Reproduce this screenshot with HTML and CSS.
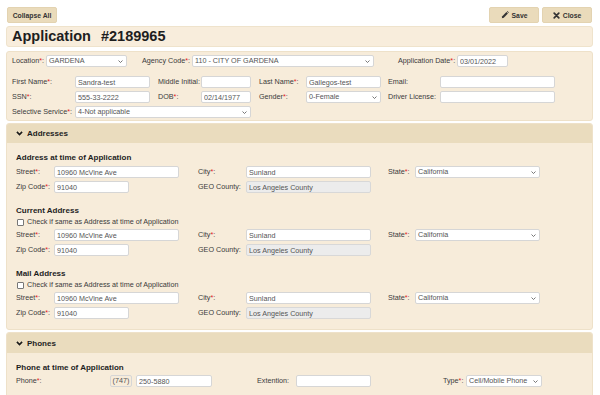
FILE: index.html
```html
<!DOCTYPE html>
<html lang="en">
<head>
<meta charset="utf-8">
<title>Application #2189965</title>
<link rel="stylesheet" href="styles.css">
</head>
<body>
<div class="page">
  <div class="toolbar">
    <button class="btn">Collapse All</button>
    <div class="toolbar-right">
      <button class="btn btn-icon"><svg class="ico" width="8" height="8" viewBox="0 0 8 8"><path d="M0.8 7.2 L1.3 5.2 L5.4 1.1 L6.9 2.6 L2.8 6.7 Z" fill="#333"/><path d="M5.9 0.6 L6.4 0.1 L7.9 1.6 L7.4 2.1 Z" fill="#333"/></svg>Save</button>
      <button class="btn btn-icon"><svg class="ico" width="7" height="7" viewBox="0 0 7 7"><path d="M1.2 1.2 L5.8 5.8 M5.8 1.2 L1.2 5.8" stroke="#333" stroke-width="1.7" stroke-linecap="round"/></svg>Close</button>
    </div>
  </div>

  <div class="titlebar">
    <h1 class="title">Application<span class="appno">#2189965</span></h1>
  </div>

  <div class="panel main-panel">
    <div class="grid-top">
      <span class="lbl">Location<span class="req">*</span>:</span>
      <div class="sel w81"><span>GARDENA</span><svg class="caret" width="5" height="3" viewBox="0 0 5 3"><path d="M0.5 0.5 L2.5 2.5 L4.5 0.5" stroke="#555" stroke-width="0.8" fill="none"/></svg></div>
      <span class="lbl">Agency Code<span class="req">*</span>:</span>
      <div class="sel w182"><span>110 - CITY OF GARDENA</span><svg class="caret" width="5" height="3" viewBox="0 0 5 3"><path d="M0.5 0.5 L2.5 2.5 L4.5 0.5" stroke="#555" stroke-width="0.8" fill="none"/></svg></div>
      <span class="lbl">Application Date<span class="req">*</span>:</span>
      <input class="inp w51" value="03/01/2022" readonly>
    </div>

    <div class="grid-person">
      <span class="lbl">First Name<span class="req">*</span>:</span>
      <input class="inp w75" value="Sandra-test" readonly>
      <span class="lbl">Middle Initial:</span>
      <input class="inp w50" value="" readonly>
      <span class="lbl">Last Name<span class="req">*</span>:</span>
      <input class="inp w75" value="Gallegos-test" readonly>
      <span class="lbl">Email:</span>
      <input class="inp w115" value="" readonly>

      <span class="lbl">SSN<span class="req">*</span>:</span>
      <input class="inp w75" value="555-33-2222" readonly>
      <span class="lbl">DOB<span class="req">*</span>:</span>
      <input class="inp w50 dob" value="02/14/1977" readonly>
      <span class="lbl">Gender<span class="req">*</span>:</span>
      <div class="sel w75"><span>0-Female</span><svg class="caret" width="5" height="3" viewBox="0 0 5 3"><path d="M0.5 0.5 L2.5 2.5 L4.5 0.5" stroke="#555" stroke-width="0.8" fill="none"/></svg></div>
      <span class="lbl">Driver License:</span>
      <input class="inp w115" value="" readonly>

      <span class="lbl">Selective Service<span class="req">*</span>:</span>
      <div class="sel w176 span3"><span>4-Not applicable</span><svg class="caret" width="5" height="3" viewBox="0 0 5 3"><path d="M0.5 0.5 L2.5 2.5 L4.5 0.5" stroke="#555" stroke-width="0.8" fill="none"/></svg></div>
    </div>
  </div>

  <div class="panel section">
    <div class="sec-head"><svg class="chev" width="7" height="5" viewBox="0 0 7 5"><path d="M0.9 0.9 L3.5 3.6 L6.1 0.9" stroke="#1a1a1a" stroke-width="1.6" fill="none"/></svg>Addresses</div>
    <div class="sec-body">
      <div class="group">
        <div class="group-title">Address at time of Application</div>
        <div class="grid-addr">
          <span class="lbl">Street<span class="req">*</span>:</span>
          <input class="inp w125" value="10960 McVine Ave" readonly>
          <span class="lbl">City<span class="req">*</span>:</span>
          <input class="inp w125" value="Sunland" readonly>
          <span class="lbl">State<span class="req">*</span>:</span>
          <div class="sel w125"><span>California</span><svg class="caret" width="5" height="3" viewBox="0 0 5 3"><path d="M0.5 0.5 L2.5 2.5 L4.5 0.5" stroke="#555" stroke-width="0.8" fill="none"/></svg></div>
          <span class="lbl">Zip Code<span class="req">*</span>:</span>
          <input class="inp w75" value="91040" readonly>
          <span class="lbl">GEO County:</span>
          <input class="inp w125 dis" value="Los Angeles County" readonly>
        </div>
      </div>

      <div class="group">
        <div class="group-title">Current Address</div>
        <label class="check-row"><span class="cbox"></span>Check if same as Address at time of Application</label>
        <div class="grid-addr after-check">
          <span class="lbl">Street<span class="req">*</span>:</span>
          <input class="inp w125" value="10960 McVine Ave" readonly>
          <span class="lbl">City<span class="req">*</span>:</span>
          <input class="inp w125" value="Sunland" readonly>
          <span class="lbl">State<span class="req">*</span>:</span>
          <div class="sel w125"><span>California</span><svg class="caret" width="5" height="3" viewBox="0 0 5 3"><path d="M0.5 0.5 L2.5 2.5 L4.5 0.5" stroke="#555" stroke-width="0.8" fill="none"/></svg></div>
          <span class="lbl">Zip Code<span class="req">*</span>:</span>
          <input class="inp w75" value="91040" readonly>
          <span class="lbl">GEO County:</span>
          <input class="inp w125 dis" value="Los Angeles County" readonly>
        </div>
      </div>

      <div class="group">
        <div class="group-title">Mail Address</div>
        <label class="check-row"><span class="cbox"></span>Check if same as Address at time of Application</label>
        <div class="grid-addr after-check">
          <span class="lbl">Street<span class="req">*</span>:</span>
          <input class="inp w125" value="10960 McVine Ave" readonly>
          <span class="lbl">City<span class="req">*</span>:</span>
          <input class="inp w125" value="Sunland" readonly>
          <span class="lbl">State<span class="req">*</span>:</span>
          <div class="sel w125"><span>California</span><svg class="caret" width="5" height="3" viewBox="0 0 5 3"><path d="M0.5 0.5 L2.5 2.5 L4.5 0.5" stroke="#555" stroke-width="0.8" fill="none"/></svg></div>
          <span class="lbl">Zip Code<span class="req">*</span>:</span>
          <input class="inp w75" value="91040" readonly>
          <span class="lbl">GEO County:</span>
          <input class="inp w125 dis" value="Los Angeles County" readonly>
        </div>
      </div>
    </div>
  </div>

  <div class="panel section phones">
    <div class="sec-head"><svg class="chev" width="7" height="5" viewBox="0 0 7 5"><path d="M0.9 0.9 L3.5 3.6 L6.1 0.9" stroke="#1a1a1a" stroke-width="1.6" fill="none"/></svg>Phones</div>
    <div class="sec-body">
      <div class="group">
        <div class="group-title">Phone at time of Application</div>
        <div class="grid-phone">
          <span class="lbl">Phone<span class="req">*</span>:</span>
          <span class="area">(747)</span>
          <input class="inp w76" value="250-5880" readonly>
          <span class="lbl">Extention:</span>
          <input class="inp w75" value="" readonly>
          <span class="lbl">Type<span class="req">*</span>:</span>
          <div class="sel w76"><span>Cell/Mobile Phone</span><svg class="caret" width="5" height="3" viewBox="0 0 5 3"><path d="M0.5 0.5 L2.5 2.5 L4.5 0.5" stroke="#555" stroke-width="0.8" fill="none"/></svg></div>
        </div>
      </div>
    </div>
  </div>
</div>
</body>
</html>
```

FILE: styles.css
```css
* { box-sizing: border-box; }

html, body {
  margin: 0;
  padding: 0;
  background: #ffffff;
}

body {
  font-family: "Liberation Sans", Arial, sans-serif;
  font-size: 7.2px;
  color: #333333;
  overflow: hidden;
}

.page {
  width: 600px;
  padding: 7px 7px 0 6px;
}

/* toolbar */
.toolbar {
  display: flex;
  justify-content: space-between;
  align-items: center;
  height: 16px;
  padding: 0 1px;
}

.toolbar-right {
  display: flex;
  gap: 3px;
}

.btn {
  height: 16px;
  width: 50px;
  margin: 0;
  padding: 0;
  border: 1px solid #e3d3b1;
  border-radius: 2px;
  background: #eadbbb;
  color: #333333;
  font-family: "Liberation Sans", Arial, sans-serif;
  font-size: 6.8px;
  font-weight: bold;
  display: flex;
  align-items: center;
  justify-content: center;
}

.btn-icon .ico {
  margin-right: 3px;
}

/* title */
.titlebar {
  margin-top: 3px;
  height: 21px;
  background: #f8eddc;
  border: 1px solid #efe3cc;
  border-radius: 3px;
  display: flex;
  align-items: center;
  padding-left: 5px;
}

.title {
  margin: 0;
  font-size: 14.5px;
  font-weight: bold;
  color: #1e1e1e;
  line-height: 17px;
}

.appno {
  margin-left: 10px;
}

/* panels */
.panel {
  background: #f7ecda;
  border: 1px solid #eee1c9;
  border-radius: 3px;
}

.main-panel {
  margin-top: 4px;
  padding: 3px 5px 2px 5px;
}

.grid-top {
  display: grid;
  grid-template-columns: 34px 96px 50px 206px 59px 51px;
  align-items: center;
  height: 12px;
}

.grid-person {
  margin-top: 9px;
  display: grid;
  grid-template-columns: 63px 83px 43px 58px 47px 82px 52px 115px;
  grid-auto-rows: 12px;
  row-gap: 3px;
  align-items: center;
}

.span3 {
  grid-column: span 3;
}

.lbl {
  white-space: nowrap;
  line-height: 12px;
  color: #3a3a3a;
}

.req {
  color: #e21b1b;
}

.inp {
  display: block;
  height: 12px;
  margin: 0;
  padding: 0 2px;
  border: 1px solid #d6d6d6;
  border-radius: 2px;
  background: #ffffff;
  color: #555555;
  font-family: "Liberation Sans", Arial, sans-serif;
  font-size: 7.2px;
  line-height: 10px;
  outline: none;
}

.inp.dis {
  background: #ececec;
  border-color: #d8d8d8;
}

.sel {
  height: 12px;
  padding: 0 3px 0 2px;
  border: 1px solid #d6d6d6;
  border-radius: 2px;
  background: #ffffff;
  color: #555555;
  line-height: 10px;
  display: flex;
  align-items: center;
  justify-content: space-between;
  white-space: nowrap;
}

.caret {
  flex: none;
  margin-left: 2px;
}

.w50 { width: 50px; }
.w51 { width: 51px; }
.w75 { width: 75px; }
.w76 { width: 76px; }
.w81 { width: 81px; }
.w115 { width: 115px; }
.w125 { width: 125px; }
.w176 { width: 176px; }
.w182 { width: 182px; }

/* sections */
.section {
  margin-top: 2px;
  overflow: hidden;
}

.sec-head {
  height: 19px;
  background: #eadcbe;
  display: flex;
  align-items: center;
  padding-left: 9px;
  font-size: 8px;
  font-weight: bold;
  color: #1e1e1e;
}

.phones .sec-head {
  height: 20px;
}

.chev {
  margin-right: 4px;
}

.sec-body {
  padding: 10px 9px 10px 9px;
}

.group + .group {
  margin-top: 13px;
}

.group-title {
  font-size: 8px;
  font-weight: bold;
  line-height: 10px;
  height: 10px;
  color: #1e1e1e;
}

.grid-addr {
  margin-top: 3px;
  display: grid;
  grid-template-columns: 38px 144px 48px 142px 27px 125px;
  grid-auto-rows: 12px;
  row-gap: 3px;
  align-items: center;
}

.grid-addr.after-check {
  margin-top: 2px;
}

.check-row {
  margin-top: 1px;
  height: 10px;
  display: flex;
  align-items: center;
  line-height: 10px;
  color: #3a3a3a;
}

.cbox {
  width: 7px;
  height: 7px;
  margin-left: 1px;
  margin-right: 3px;
  border: 1px solid #777777;
  border-radius: 1px;
  background: #ffffff;
}

.grid-phone {
  margin-top: 2px;
  display: grid;
  grid-template-columns: 94px 26px 121px 39px 147px 23px 76px;
  grid-auto-rows: 12px;
  align-items: center;
}

.area {
  width: 22px;
  height: 12px;
  border: 1px solid #d6d6d6;
  border-radius: 2px;
  background: #f7ecda;
  color: #555555;
  line-height: 10px;
  text-align: center;
}
```
